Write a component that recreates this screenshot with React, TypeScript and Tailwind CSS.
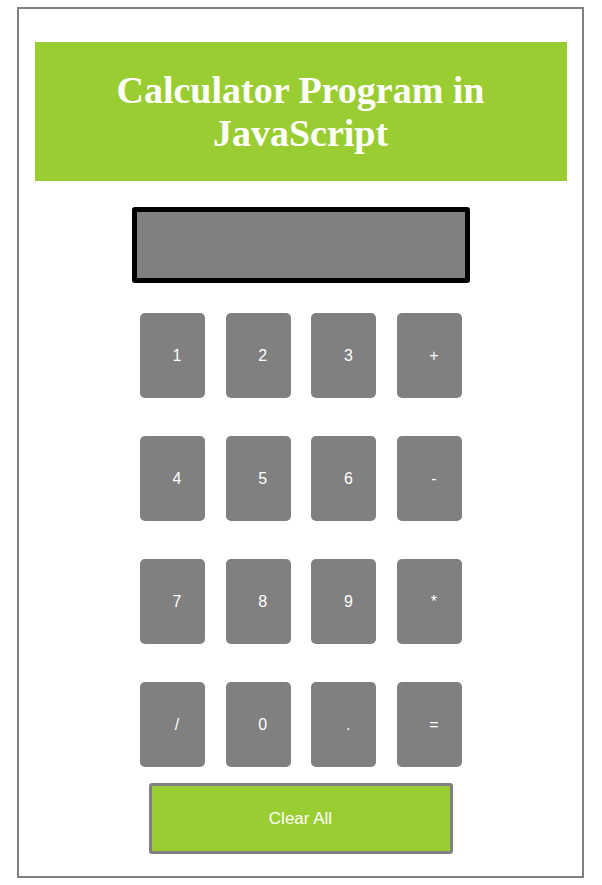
import React from "react";

const keys = ["1", "2", "3", "+", "4", "5", "6", "-", "7", "8", "9", "*", "/", "0", ".", "="];

export default function App() {
  return (
    <div className="bg-white pt-[7px] pl-[17px]" style={{ fontFamily: '"Liberation Sans", Arial, sans-serif' }}>
      <div className="w-[567px] h-[871px] border-2 border-[#808080] flex flex-col items-center">
        <div className="mt-[33px] w-[532px] h-[139px] bg-[#9acd32] flex items-center justify-center">
          <h1
            className="text-white font-bold text-center text-[38px] leading-[43px]"
            style={{ fontFamily: '"Liberation Serif", "Times New Roman", serif' }}
          >
            Calculator Program in
            <br />
            JavaScript
          </h1>
        </div>
        <div className="mt-[26px] w-[338px] h-[76px] border-[5px] border-black rounded-[3px] bg-[#808080]" />
        <div className="mt-[30px] ml-[1px] grid grid-cols-[repeat(4,65px)] gap-x-[20.67px] gap-y-[38px]">
          {keys.map((k) => (
            <button
              key={k}
              className="w-[65px] h-[85px] rounded-[5px] bg-[#808080] text-white text-[16px] pl-[9px] flex items-center justify-center"
            >
              {k}
            </button>
          ))}
        </div>
        <button className="mt-[16px] w-[304px] h-[71px] border-[3px] border-[#808080] rounded-[3px] bg-[#9acd32] text-white text-[17px]">
          Clear All
        </button>
      </div>
    </div>
  );
}
